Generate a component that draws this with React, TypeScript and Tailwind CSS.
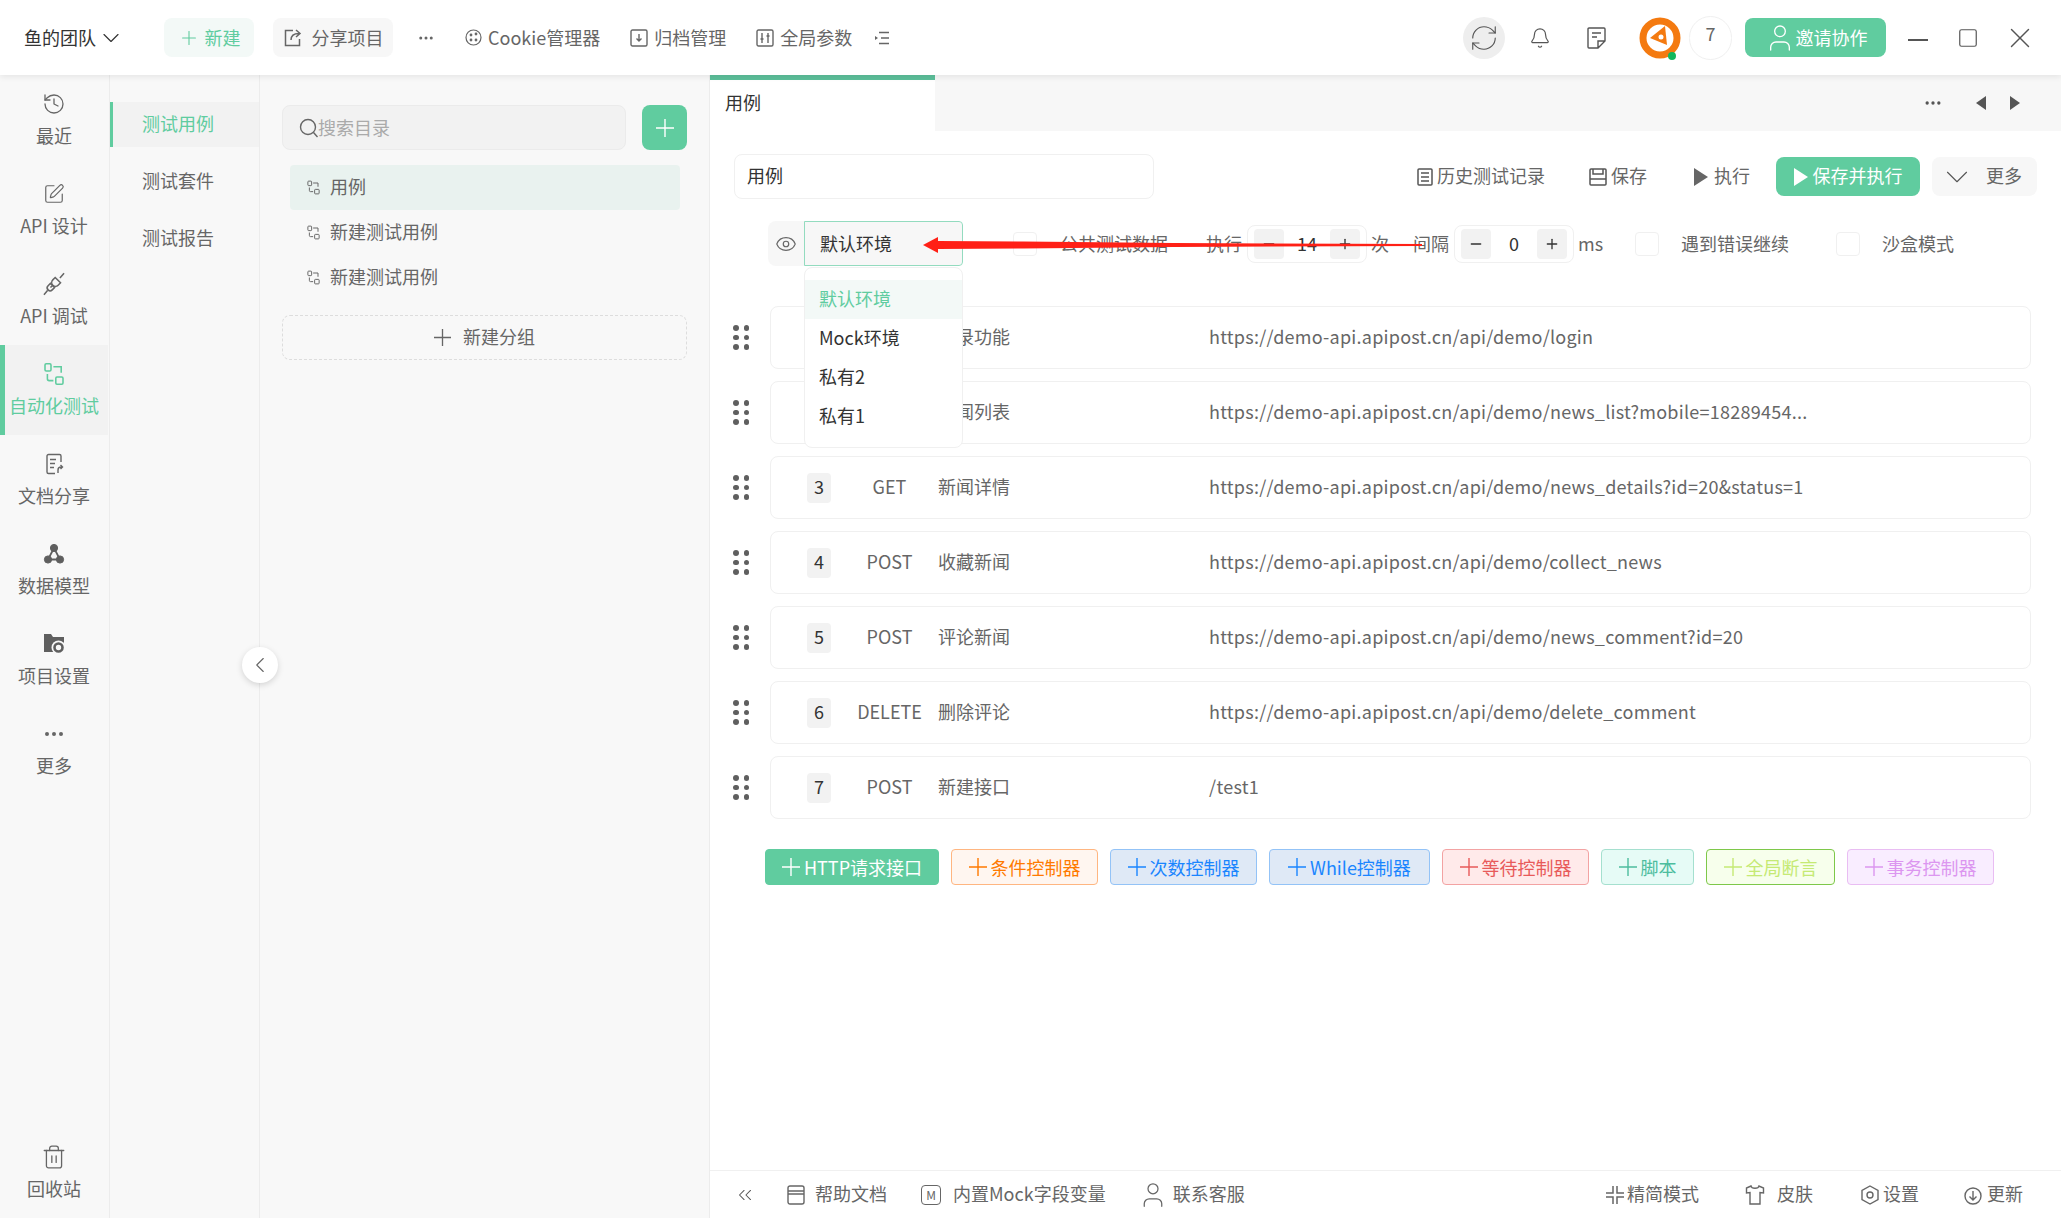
import { Bell, ChevronDown, ChevronLeft, ChevronsLeft, Ellipsis, Eye, History, Minus, Plus, RefreshCw, Square, SquarePen, Trash2, User, X } from "lucide-react";
import type { ReactNode } from "react";

const flowIcon = (size: number, color = "#666") => (
  <svg width={size} height={size} viewBox="0 0 20 20" fill="none" stroke={color} strokeWidth="1.3">
    <rect x="2.5" y="1.5" width="5" height="6" rx="1" />
    <rect x="11.5" y="12.5" width="6" height="6" rx="1" />
    <path d="M9.5 4H16v5M4.5 10v4c0 1 .5 1.5 1.500 1.500H9.500" />
  </svg>
);

const railItems: { label: string; icon: ReactNode; active?: boolean }[] = [
  { label: "最近", icon: <History size={24} strokeWidth={1.3} color="#666" /> },
  { label: "API 设计", icon: <SquarePen size={22} strokeWidth={1.3} color="#666" /> },
  {
    label: "API 调试",
    icon: (
      <svg width="26" height="26" viewBox="0 0 22 22" fill="none" stroke="#666" strokeWidth="1.3">
        <path d="M12 5.500l4.500 4.500-2 2c-1.200 1.200-3.300 1.200-4.500 0-1.200-1.200-1.200-3.300 0-4.500z" />
        <path d="M10 12l-2 2M8 10.500l3.500 3.500-2 2c-1 1-2.500 1-3.500 0s-1-2.500 0-3.500zM5.500 16.500L2.500 20M16 6l3.500-4" />
      </svg>
    ),
  },
  { label: "自动化测试", icon: flowIcon(24, "#60cc9f"), active: true },
  {
    label: "文档分享",
    icon: (
      <svg width="22" height="24" viewBox="0 0 22 22" fill="none" stroke="#666" strokeWidth="1.4">
        <path d="M12 20.500H5.500a1.500 1.500 0 0 1-1.500-1.500V3a1.500 1.500 0 0 1 1.500-1.500h11A1.500 1.500 0 0 1 18 3v6" />
        <path d="M7 6.500h6M7 10.500h5M7 14.500h4M15 20v-3c0-2 1-3 3-3h1M17.500 12l2 2-2 2" />
      </svg>
    ),
  },
  {
    label: "数据模型",
    icon: (
      <svg width="22" height="22" viewBox="0 0 22 22" fill="#5f5f5f" stroke="#5f5f5f">
        <circle cx="11" cy="5" r="3.600" />
        <circle cx="5" cy="16.500" r="3.600" />
        <circle cx="17" cy="16.500" r="3.600" />
        <path d="M11 5L5 16.500h12z" fill="none" strokeWidth="1.800" />
      </svg>
    ),
  },
  {
    label: "项目设置",
    icon: (
      <svg width="24" height="22" viewBox="0 0 24 22">
        <path d="M2 1h7l2 3h11v8H12v7H2z" fill="#5f5f5f" />
        <circle cx="16.500" cy="14.500" r="7" fill="#f8f8f8" />
        <circle cx="16.500" cy="14.500" r="4" fill="none" stroke="#5f5f5f" strokeWidth="2.600" />
      </svg>
    ),
  },
  { label: "更多", icon: <Ellipsis size={24} strokeWidth={2} color="#666" /> },
];

const methods = [
  { n: 1, method: "POST", name: "登录功能", url: "https://demo-api.apipost.cn/api/demo/login" },
  { n: 2, method: "GET", name: "新闻列表", url: "https://demo-api.apipost.cn/api/demo/news_list?mobile=18289454..." },
  { n: 3, method: "GET", name: "新闻详情", url: "https://demo-api.apipost.cn/api/demo/news_details?id=20&status=1" },
  { n: 4, method: "POST", name: "收藏新闻", url: "https://demo-api.apipost.cn/api/demo/collect_news" },
  { n: 5, method: "POST", name: "评论新闻", url: "https://demo-api.apipost.cn/api/demo/news_comment?id=20" },
  { n: 6, method: "DELETE", name: "删除评论", url: "https://demo-api.apipost.cn/api/demo/delete_comment" },
  { n: 7, method: "POST", name: "新建接口", url: "/test1" },
];

const addButtons = [
  { label: "HTTP请求接口", cls: "w-[174px] border-[#60cc9f] bg-[#60cc9f] text-white" },
  { label: "条件控制器", cls: "w-[147px] border-[#ffb681] bg-[#fff6f0] text-[#ff7a00]" },
  { label: "次数控制器", cls: "w-[147px] border-[#93c3f7] bg-[#dfe9f6] text-[#1a85ff]" },
  { label: "While控制器", cls: "w-[161px] border-[#93c3f7] bg-[#dfe9f6] text-[#1a85ff]" },
  { label: "等待控制器", cls: "w-[147px] border-[#f3a3a3] bg-[#ffeaea] text-[#e85a5a]" },
  { label: "脚本", cls: "w-[93px] border-[#a5e0cf] bg-[#e6fbf6] text-[#4dbd9e]" },
  { label: "全局断言", cls: "w-[129px] border-[#7ec84a] bg-[#f7ffec] text-[#c5ea74]" },
  { label: "事务控制器", cls: "w-[147px] border-[#e9bdf3] bg-[#f9edff] text-[#dc96f0]" },
];

// Noto sits a little low in its line box, nudge labels back up
function T({ children, className = "" }: { children: ReactNode; className?: string }) {
  return <span className={`whitespace-nowrap pb-[2px] ${className}`}>{children}</span>;
}

function PlusMark({ size = 17 }: { size?: number }) {
  return (
    <svg width={size} height={size} viewBox="0 0 18 18" stroke="currentColor" strokeWidth="1.400" className="shrink-0">
      <path d="M0 9h18M9 0v18" />
    </svg>
  );
}

function PlayMark({ color }: { color: string }) {
  return (
    <svg width="14" height="18" viewBox="0 0 14 18" fill={color} className="shrink-0">
      <path d="M0 0l14 9-14 9z" />
    </svg>
  );
}

function Stepper({ value }: { value: number }) {
  return (
    <div className="flex h-[38px] w-[120px] items-center justify-between rounded-lg border border-[#f0f0f0] px-[6px]">
      <span className="flex h-[30px] w-[30px] items-center justify-center rounded bg-[#f2f2f2]">
        <Minus size={16} color="#333" />
      </span>
      <span className="text-[18px] text-[#333]">{value}</span>
      <span className="flex h-[30px] w-[30px] items-center justify-center rounded bg-[#f2f2f2]">
        <Plus size={16} color="#333" />
      </span>
    </div>
  );
}

function Check({ className }: { className: string }) {
  return <span className={`h-[24px] w-[24px] shrink-0 rounded border border-[#f0f0f0] ${className}`} />;
}

function TopBar() {
  return (
    <header className="relative z-10 flex h-[75px] shrink-0 items-center bg-white pr-[32px] text-[18px] leading-[24px] text-[#666] shadow-[0_2px_6px_rgba(0,0,0,0.08)]">
      <T className="ml-[24px] text-[#333]">鱼的团队</T>
      <ChevronDown size={28} strokeWidth={1} color="#333" className="ml-[1px]" />
      <button className="ml-[39px] flex h-[39px] w-[90px] items-center justify-center gap-[5px] rounded-lg bg-[#f3f9f7] text-[#60cc9f]">
        <Plus size={22} strokeWidth={1.2} />
        <T>新建</T>
      </button>
      <button className="ml-[19px] flex h-[39px] w-[120px] items-center justify-center gap-[9px] rounded-lg bg-[#f7f7f7]">
        <svg width="20" height="20" viewBox="0 0 20 20" fill="none" stroke="#666" strokeWidth="1.500">
          <path d="M10 2.500H2.500v15h14V11M8 12c0-4 2.500-6.500 8-6.500M13 2l4 3.500-4 3.500" />
        </svg>
        <T>分享项目</T>
      </button>
      <Ellipsis size={18} color="#666" className="ml-[24px]" />
      <svg width="17" height="17" viewBox="0 0 17 17" fill="none" stroke="#666" strokeWidth="1.200" className="ml-[30px]">
        <circle cx="8.500" cy="8.500" r="7.500" />
        <circle cx="6" cy="6" r=".8" fill="#666" />
        <circle cx="11" cy="5" r=".8" fill="#666" />
        <circle cx="6" cy="11" r=".8" fill="#666" />
        <circle cx="11" cy="11" r=".8" fill="#666" />
      </svg>
      <T className="ml-[6px]">Cookie管理器</T>
      <svg width="18" height="18" viewBox="0 0 18 18" fill="none" stroke="#666" strokeWidth="1.400" className="ml-[30px]">
        <rect x="1" y="1" width="16" height="16" rx="1.500" />
        <path d="M9 5v7M6.500 9.500L9 12l2.500-2.500" />
      </svg>
      <T className="ml-[6px]">归档管理</T>
      <svg width="18" height="18" viewBox="0 0 18 18" fill="none" stroke="#666" strokeWidth="1.400" className="ml-[30px]">
        <rect x="1" y="1" width="16" height="16" rx="1.500" />
        <path d="M6 4v10M12 4v10M4.500 10h3M10.500 7h3" />
      </svg>
      <T className="ml-[6px]">全局参数</T>
      <svg width="14" height="14" viewBox="0 0 14 14" fill="none" stroke="#666" strokeWidth="1.300" className="ml-[23px]">
        <path d="M4 1.500h10M6 7h8M4 12.500h10" />
        <path d="M0 5l3 2-3 2z" fill="#666" stroke="none" />
      </svg>

      <span className="ml-auto flex h-[42px] w-[42px] items-center justify-center rounded-full bg-[#eeeeee]">
        <RefreshCw size={30} strokeWidth={0.9} color="#555" />
      </span>
      <Bell size={22} strokeWidth={1.300} color="#555" className="ml-[24px]" />
      <svg width="20" height="22" viewBox="0 0 20 22" fill="none" stroke="#555" strokeWidth="1.400" className="ml-[36px]">
        <path d="M11 21H2a1 1 0 0 1-1-1V2a1 1 0 0 1 1-1h15a1 1 0 0 1 1 1v12zM11 21v-7h7M5 6h9M5 10h5" />
      </svg>
      <span className="relative ml-[32px] h-[42px] w-[42px]">
        <svg width="42" height="42" viewBox="0 0 42 42">
          <circle cx="21" cy="21" r="17" fill="#fff" stroke="#f47a10" strokeWidth="7" />
          <path d="M26 9l2 19-17-7z" fill="#f47a10" />
          <circle cx="22" cy="20" r="2.500" fill="#fff" />
        </svg>
        <span className="absolute bottom-[-1px] right-[5px] h-[8px] w-[8px] rounded-full bg-[#12b75d]" />
      </span>
      <span className="ml-[8px] flex h-[44px] w-[43px] items-start justify-center rounded-full border border-[#f0f0f0] pt-[4px] text-[#666]">7</span>
      <button className="ml-[13px] flex h-[39px] w-[141px] items-center justify-center rounded-lg bg-[#60cc9f] text-white">
        <User size={32} strokeWidth={1} />
        <T>邀请协作</T>
      </button>
      <span className="ml-[22px] mt-[4px] h-[2px] w-[20px] bg-[#555]" />
      <Square size={22} strokeWidth={1.300} color="#555" className="ml-[29px]" />
      <X size={34} strokeWidth={1} color="#555" className="ml-[24px] mr-[-8px]" />
    </header>
  );
}

function Rail() {
  return (
    <nav className="flex h-full w-[110px] shrink-0 flex-col border-r border-[#ececec] bg-[#f8f8f8] pr-[1px] text-[18px] text-[#666]">
      {railItems.map((item) => (
        <RailItem key={item.label} {...item} />
      ))}
      <div className="mt-auto">
        <RailItem label="回收站" icon={<Trash2 size={26} strokeWidth={1.200} color="#666" />} />
      </div>
    </nav>
  );
}

function RailItem({ label, icon, active }: { label: string; icon: ReactNode; active?: boolean }) {
  return (
    <div className={`flex h-[90px] flex-col items-center pt-[18px] ${active ? "border-l-[5px] border-[#60cc9f] bg-[#f2f2f2] pr-[5px] text-[#60cc9f]" : ""}`}>
      <span className="flex h-[22px] items-center">{icon}</span>
      <span className="mt-[8px] whitespace-nowrap leading-[24px]">{label}</span>
    </div>
  );
}

function SubNav() {
  return (
    <div className="flex w-[150px] shrink-0 flex-col gap-[12px] border-r border-[#ececec] bg-[#f8f8f8] pt-[27px] text-[18px] text-[#666]">
      <div className="flex h-[45px] items-center border-l-[3px] border-[#60cc9f] bg-[#f2f2f2] pl-[29px] text-[#60cc9f]"><T>测试用例</T></div>
      <div className="flex h-[45px] items-center pl-[32px]"><T>测试套件</T></div>
      <div className="flex h-[45px] items-center pl-[32px]"><T>测试报告</T></div>
    </div>
  );
}

function TreePanel() {
  return (
    <div className="relative w-[450px] shrink-0 border-r border-[#ececec] bg-[#f8f8f8] pl-[22px] pt-[30px] text-[18px] text-[#666]">
      <div className="flex items-center gap-[16px]">
        <div className="flex h-[45px] w-[344px] items-center rounded-lg border border-[#ebebeb] bg-[#f2f2f2] pl-[16px] text-[#aaa]">
          <svg width="20" height="20" viewBox="0 0 20 20" fill="none" stroke="#666" strokeWidth="1.400" className="shrink-0">
            <circle cx="9" cy="9" r="7.500" />
            <path d="M14.500 14.500L18.500 19" />
          </svg>
          <span className="ml-[-1px]">搜索目录</span>
        </div>
        <button className="flex h-[45px] w-[45px] items-center justify-center rounded-lg bg-[#60cc9f] text-white">
          <PlusMark size={18} />
        </button>
      </div>
      <div className="ml-[8px] mt-[15px] w-[390px]">
        {["用例", "新建测试用例", "新建测试用例"].map((name, i) => (
          <div key={i} className={`flex h-[45px] items-center gap-[9px] rounded pl-[16px] ${i === 0 ? "bg-[#e9f2ef]" : ""}`}>
            {flowIcon(15)}
            <T>{name}</T>
          </div>
        ))}
      </div>
      <div className="mt-[15px] flex h-[45px] w-[405px] items-center justify-center gap-[12px] rounded-lg border border-dashed border-[#dddddd]">
        <PlusMark />
        <T>新建分组</T>
      </div>
      <button className="absolute left-[-18px] top-[572px] z-10 flex h-[36px] w-[36px] items-center justify-center rounded-full bg-white shadow-[0_2px_6px_rgba(0,0,0,0.15)]">
        <ChevronLeft size={26} strokeWidth={1} color="#666" />
      </button>
    </div>
  );
}

function Toolbar() {
  return (
    <div className="mt-[23px] flex items-center pl-[24px] pr-[24px] text-[18px] text-[#666]">
      <div className="flex h-[45px] w-[420px] items-center rounded-lg border border-[#f0f0f0] pl-[12px] text-[#333]"><T>用例</T></div>
      <svg width="16" height="18" viewBox="0 0 16 18" fill="none" stroke="#555" strokeWidth="1.500" className="ml-auto">
        <rect x="1" y="1" width="14" height="16" rx="1" />
        <path d="M4 5h8M4 9h8M4 13h8" />
      </svg>
      <T className="ml-[4px]">历史测试记录</T>
      <svg width="18" height="18" viewBox="0 0 18 18" fill="none" stroke="#555" strokeWidth="1.500" className="ml-[44px]">
        <rect x="1" y="1" width="16" height="16" rx="1" />
        <path d="M4 1v5h10V1M1 11h16" />
      </svg>
      <T className="ml-[4px]">保存</T>
      <span className="ml-[47px]"><PlayMark color="#666" /></span>
      <T className="ml-[6px]">执行</T>
      <button className="ml-[26px] flex h-[39px] w-[144px] items-center justify-center gap-[5px] rounded-lg bg-[#60cc9f] text-white">
        <PlayMark color="#fff" />
        <T>保存并执行</T>
      </button>
      <button className="ml-[12px] flex h-[39px] w-[105px] items-center justify-end gap-[10px] rounded-lg bg-[#f7f7f7] pr-[15px]">
        <ChevronDown size={38} strokeWidth={0.7} color="#555" />
        <T>更多</T>
      </button>
    </div>
  );
}

function EnvRow() {
  return (
    <div className="mt-[22px] flex items-center pl-[58px] text-[18px] text-[#666]">
      <div className="relative flex h-[45px] w-[195px] rounded-lg bg-[#f7f7f7]">
        <span className="flex w-[36px] items-center justify-center">
          <Eye size={22} strokeWidth={1.300} color="#666" />
        </span>
        <span className="flex flex-1 items-center rounded-r border border-[#93dbbf] pl-[15px] text-[#333]">默认环境</span>
        <div className="absolute left-[36px] top-[46px] z-20 h-[181px] w-[159px] rounded-lg border border-[#f0f0f0] bg-white pt-[12px] text-[#333]">
          <div className="flex h-[39px] items-center bg-[#f3f9f7] pl-[14px] text-[#60cc9f]"><T>默认环境</T></div>
          <div className="flex h-[39px] items-center pl-[14px]"><T>Mock环境</T></div>
          <div className="flex h-[39px] items-center pl-[14px]"><T>私有2</T></div>
          <div className="flex h-[39px] items-center pl-[14px]"><T>私有1</T></div>
        </div>
      </div>
      <Check className="ml-[50px]" />
      <span className="ml-[23px]">公共测试数据</span>
      <span className="ml-[38px]">执行</span>
      <div className="ml-[5px]"><Stepper value={14} /></div>
      <span className="ml-[4px]">次</span>
      <span className="ml-[24px]">间隔</span>
      <div className="ml-[5px]"><Stepper value={0} /></div>
      <span className="ml-[4px]">ms</span>
      <Check className="ml-[32px]" />
      <span className="ml-[22px]">遇到错误继续</span>
      <Check className="ml-[47px]" />
      <span className="ml-[22px]">沙盒模式</span>
    </div>
  );
}

function CaseRow({ n, method, name, url }: (typeof methods)[number]) {
  return (
    <div className="flex items-center pl-[23px] text-[18px] text-[#666]">
      <div className="grid w-[16px] grid-cols-2 gap-x-[5px] gap-y-[4px]">
        {[0, 1, 2, 3, 4, 5].map((d) => (
          <span key={d} className="h-[5.500px] w-[5.500px] rounded-full bg-[#5f5f5f]" />
        ))}
      </div>
      <div className="ml-[21px] flex h-[63px] w-[1261px] items-center rounded-lg border border-[#f0f0f0]">
        <span className="ml-[36px] flex h-[30px] w-[24px] items-center justify-center rounded bg-[#f2f2f2] pb-[2px] text-[#333]">{n}</span>
        <T className="ml-[10px] w-[97px] text-center">{method}</T>
        <T className="w-[271px]">{name}</T>
        <T className="tracking-[0.25px]">{url}</T>
      </div>
    </div>
  );
}

function Footer() {
  return (
    <footer className="mt-auto flex h-[48px] shrink-0 items-center border-t border-[#f0f0f0] pl-[24px] pr-[38px] text-[18px] text-[#666]">
      <ChevronsLeft size={22} strokeWidth={1.100} color="#555" />
      <svg width="18" height="20" viewBox="0 0 18 20" fill="none" stroke="#666" strokeWidth="1.400" className="ml-[31px]">
        <rect x="1" y="1" width="16" height="18" rx="2" />
        <path d="M1 6h16M1 9h16" />
      </svg>
      <T className="ml-[10px]">帮助文档</T>
      <span className="ml-[34px] flex h-[20px] w-[20px] items-center justify-center rounded-sm border border-[#666] text-[12px] leading-none">M</span>
      <T className="ml-[12px]">内置Mock字段变量</T>
      <User size={30} strokeWidth={1} color="#666" className="ml-[32px]" />
      <T className="ml-[5px]">联系客服</T>
      <svg width="20" height="20" viewBox="0 0 20 20" fill="none" stroke="#666" strokeWidth="1.500" className="ml-auto">
        <path d="M8 1v7H1M12 1v7h7M8 19v-7H1M12 19v-7h7" />
      </svg>
      <T className="ml-[2px]">精简模式</T>
      <svg width="20" height="20" viewBox="0 0 20 20" fill="none" stroke="#666" strokeWidth="1.400" className="ml-[46px]">
        <path d="M6 1L1.500 3v5L5 7.500V19h10V7.500l3.500.5V3L14 1c-.5 3-7.500 3-8 0z" />
      </svg>
      <T className="ml-[12px]">皮肤</T>
      <svg width="18" height="20" viewBox="0 0 18 20" fill="none" stroke="#666" strokeWidth="1.400" className="ml-[48px]">
        <path d="M9 1l8 4.500v9L9 19l-8-4.500v-9z" />
        <circle cx="9" cy="10" r="3" />
      </svg>
      <T className="ml-[4px]">设置</T>
      <svg width="20" height="20" viewBox="0 0 20 20" fill="none" stroke="#666" strokeWidth="1.400" className="ml-[44px]">
        <circle cx="10" cy="11" r="8" />
        <path d="M10 6v9M6.500 11.500L10 15l3.500-3.500" />
      </svg>
      <T className="ml-[4px]">更新</T>
    </footer>
  );
}

function Main() {
  return (
    <main className="relative flex min-w-0 flex-1 flex-col bg-white">
      <div className="flex h-[56px] shrink-0 items-center bg-[#f7f7f7] text-[18px]">
        <div className="flex h-full w-[225px] items-center border-t-[5px] border-[#5cbf9a] bg-white pb-[6px] pl-[15px] text-[#333]">用例</div>
        <Ellipsis size={20} color="#555" className="ml-auto" />
        <svg width="10" height="14" viewBox="0 0 10 14" fill="#555" className="ml-[33px]"><path d="M10 0v14L0 7z" /></svg>
        <svg width="10" height="14" viewBox="0 0 10 14" fill="#555" className="ml-[24px] mr-[41px]"><path d="M0 0v14l10-7z" /></svg>
      </div>
      <Toolbar />
      <EnvRow />
      <div className="mt-[40px] flex flex-col gap-[12px]">
        {methods.map((m) => (
          <CaseRow key={m.n} {...m} />
        ))}
      </div>
      <div className="ml-[55px] mt-[30px] flex gap-[12px] text-[18px]">
        {addButtons.map((b) => (
          <button key={b.label} className={`flex h-[36px] items-center justify-center gap-[4px] rounded border ${b.cls}`}>
            <PlusMark size={18} />
            {b.label}
          </button>
        ))}
      </div>
      <Footer />
      {/* 截图上的红色标注箭头 */}
      <svg width="500" height="18" viewBox="0 0 500 18" className="absolute left-[213px] top-[161px] z-30">
        <path d="M0 9L15 1v4L100 5.500L250 7L499 8v2L250 11L100 12.500L15 13v4z" fill="#ff2016" />
      </svg>
    </main>
  );
}

export default function App() {
  return (
    <div className="flex h-screen w-full flex-col overflow-hidden bg-white font-['Noto_Sans_CJK_SC',sans-serif]">
      <TopBar />
      <div className="flex min-h-0 flex-1">
        <Rail />
        <SubNav />
        <TreePanel />
        <Main />
      </div>
    </div>
  );
}
